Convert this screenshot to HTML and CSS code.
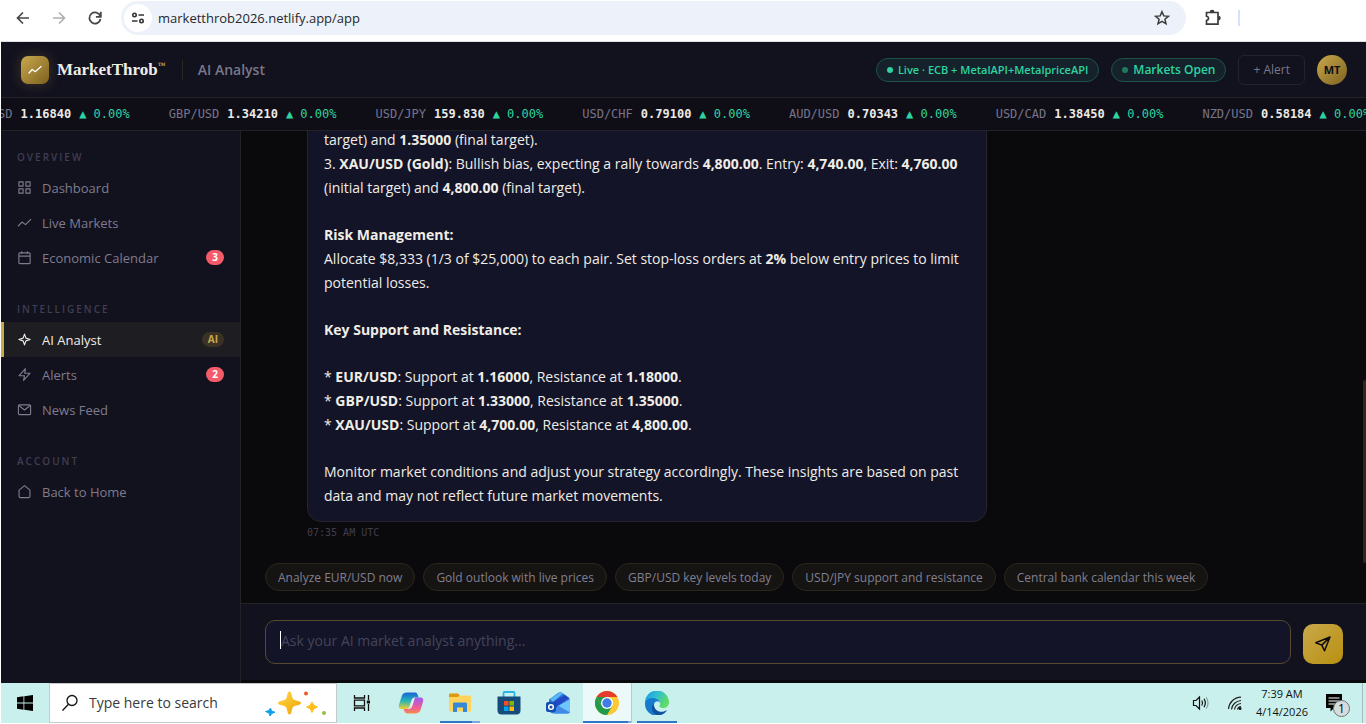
FILE: index.html
```html
<!DOCTYPE html>
<html lang="en">
<head>
<meta charset="utf-8">
<title>MarketThrob – AI Analyst</title>
<link rel="stylesheet" href="styles.css">
</head>
<body>
<div class="browser">
  <button class="tool" aria-label="Back"><svg width="16" height="16" viewBox="0 0 16 16" fill="none" stroke="#474747" stroke-width="1.7"><path d="M14 8H3M8 2.5 2.5 8 8 13.500"/></svg></button>
  <button class="tool" aria-label="Forward"><svg width="16" height="16" viewBox="0 0 16 16" fill="none" stroke="#b0b0b0" stroke-width="1.7"><path d="M2 8h11M8 2.500 13.500 8 8 13.500"/></svg></button>
  <button class="tool" aria-label="Reload"><svg width="16" height="16" viewBox="0 0 16 16" fill="none" stroke="#474747" stroke-width="1.8"><path d="M13.300 6.200A5.600 5.600 0 1 0 13.500 9"/><path d="M13.800 1.800v5H8.900" /></svg></button>
  <div class="address">
    <button class="site-info" aria-label="Site information"><svg width="14" height="14" viewBox="0 0 14 14" fill="none" stroke="#333" stroke-width="1.6"><circle cx="3.500" cy="4" r="1.700"/><path d="M7.500 4H13M1 10h5.500"/><circle cx="10.500" cy="10" r="1.700"/></svg></button>
    <input class="url" type="text" aria-label="Address" value="marketthrob2026.netlify.app/app">
    <button class="star" aria-label="Bookmark"><svg width="16" height="16" viewBox="0 0 16 16" fill="none" stroke="#3c3c3c" stroke-width="1.500"><path d="m8 1.700 1.800 4.200 4.600.4-3.500 3 1.100 4.500L8 11.400l-4 2.400 1.100-4.500-3.500-3 4.600-.4z"/></svg></button>
  </div>
  <button class="ext" aria-label="Extensions"><svg width="18" height="18" viewBox="0 0 18 18" fill="none" stroke="#3c3c3c" stroke-width="1.700"><path d="M2.500 3.500H14v11.700H2.500v-3.600c2.800-.8 2.800-3.700 0-4.500z"/><path d="M6.500 3.200a1.600 1.600 0 0 1 3.200 0M14.300 7.500a1.600 1.600 0 0 1 0 3.200" fill="#3c3c3c"/></svg></button>
  <span class="tool-sep"></span>
</div>

<div class="app">
  <header class="topbar">
    <span class="logo"><svg width="14" height="14" viewBox="0 0 14 14" fill="none" stroke="#fff" stroke-width="1.300" stroke-linejoin="round" stroke-linecap="round"><path d="m1 10 3.200-3.500 3 2.200L13 3.500"/></svg></span>
    <span class="brand">MarketThrob<sup>™</sup></span>
    <h1 class="page-name">AI Analyst</h1>
    <div class="status">
      <span class="pill pill-live"><i class="dot"></i>Live · ECB + MetalAPI+MetalpriceAPI</span>
      <span class="pill pill-open"><i class="dot dot-dim"></i>Markets Open</span>
      <button class="alert-btn">+ Alert</button>
      <button class="avatar">MT</button>
    </div>
  </header>

  <div class="ticker">
    <span class="quote"><span>EUR/USD</span><b>1.16840</b><em>▲ 0.00%</em></span>
    <span class="quote"><span>GBP/USD</span><b>1.34210</b><em>▲ 0.00%</em></span>
    <span class="quote"><span>USD/JPY</span><b>159.830</b><em>▲ 0.00%</em></span>
    <span class="quote"><span>USD/CHF</span><b>0.79100</b><em>▲ 0.00%</em></span>
    <span class="quote"><span>AUD/USD</span><b>0.70343</b><em>▲ 0.00%</em></span>
    <span class="quote"><span>USD/CAD</span><b>1.38450</b><em>▲ 0.00%</em></span>
    <span class="quote"><span>NZD/USD</span><b>0.58184</b><em>▲ 0.00%</em></span>
  </div>

  <div class="body">
    <nav class="sidebar">
      <section class="group">
        <h2>Overview</h2>
        <a class="item" href="#dashboard"><svg viewBox="0 0 16 16"><path d="M2 2h4.500v4.500H2zM9.500 2H14v4.500H9.500zM2 9.500h4.500V14H2zM9.500 9.500H14V14H9.500z"/></svg>Dashboard</a>
        <a class="item" href="#markets"><svg viewBox="0 0 16 16"><path d="m1 12 4.300-4.500 3.800 2.800L15 4.300"/></svg>Live Markets</a>
        <a class="item" href="#calendar"><svg viewBox="0 0 16 16"><rect x="2" y="3" width="12" height="11.500" rx="1"/><path d="M2 6.500h12M5 1.200V4M11 1.200V4"/></svg>Economic Calendar<span class="badge">3</span></a>
      </section>
      <section class="group">
        <h2>Intelligence</h2>
        <a class="item active" href="#analyst"><svg viewBox="0 0 16 16"><path d="M8 2.200 9.500 6.500 14 8 9.500 9.500 8 13.800 6.500 9.500 2 8l4.500-1.500z"/></svg>AI Analyst<span class="badge badge-ai">AI</span></a>
        <a class="item" href="#alerts"><svg viewBox="0 0 16 16"><path d="M9 1.800 2.200 9.300H8l-1 5 6.800-7.600H8.200z"/></svg>Alerts<span class="badge">2</span></a>
        <a class="item" href="#news"><svg viewBox="0 0 16 16"><rect x="1.500" y="3" width="13" height="10.500" rx="1"/><path d="M2 3.800 8 8.500l6-4.700"/></svg>News Feed</a>
      </section>
      <section class="group">
        <h2>Account</h2>
        <a class="item" href="#home"><svg viewBox="0 0 16 16"><path d="M2.200 6.500 8 1.700l5.800 4.800V13a1.500 1.500 0 0 1-1.500 1.500H3.700A1.500 1.500 0 0 1 2.200 13z"/></svg>Back to Home</a>
      </section>
    </nav>

    <main class="main">
      <div class="messages">
        <article class="message">
          <div class="bubble">
            <p>target) and <b>1.35000</b> (final target).<br>3. <b>XAU/USD (Gold)</b>: Bullish bias, expecting a rally towards <b>4,800.00</b>. Entry: <b>4,740.00</b>, Exit: <b>4,760.00</b><br>(initial target) and <b>4,800.00</b> (final target).</p>
            <p><b>Risk Management:</b><br>Allocate $8,333 (1/3 of $25,000) to each pair. Set stop-loss orders at <b>2%</b> below entry prices to limit<br>potential losses.</p>
            <p><b>Key Support and Resistance:</b></p>
            <p>* <b>EUR/USD</b>: Support at <b>1.16000</b>, Resistance at <b>1.18000</b>.<br>* <b>GBP/USD</b>: Support at <b>1.33000</b>, Resistance at <b>1.35000</b>.<br>* <b>XAU/USD</b>: Support at <b>4,700.00</b>, Resistance at <b>4,800.00</b>.</p>
            <p>Monitor market conditions and adjust your strategy accordingly. These insights are based on past<br>data and may not reflect future market movements.</p>
          </div>
          <time class="stamp">07:35 AM UTC</time>
        </article>
        <span class="thumb"></span>
      </div>
      <div class="chips">
        <button>Analyze EUR/USD now</button>
        <button>Gold outlook with live prices</button>
        <button>GBP/USD key levels today</button>
        <button>USD/JPY support and resistance</button>
        <button>Central bank calendar this week</button>
      </div>
      <form class="composer">
        <div class="field">
          <textarea rows="1" aria-label="Message" placeholder="Ask your AI market analyst anything..."></textarea>
          <span class="caret"></span>
        </div>
        <button class="send" type="button" aria-label="Send"><svg width="18" height="18" viewBox="0 0 18 18" fill="none" stroke="#0c0b10" stroke-width="1.500" stroke-linejoin="round"><path d="M16 2 1.800 7.700l6 2.400 2.700 5.700zM16 2 7.800 10.100"/></svg></button>
      </form>
    </main>
  </div>
</div>

<footer class="taskbar">
  <button class="task start" aria-label="Start"><svg width="16" height="16" viewBox="0 0 16 16"><path d="M0 2.200 6.500 1.300V7.600H0zM7.300 1.200 16 0v7.600H7.300zM0 8.400h6.500v6.300L0 13.800zM7.300 8.400H16V16l-8.700-1.200z"/></svg></button>
  <label class="search">
    <svg width="18" height="18" viewBox="0 0 18 18" fill="none" stroke="#111" stroke-width="1.300"><circle cx="11" cy="6.500" r="5"/><path d="M7.500 10.200 1.500 16.500"/></svg>
    <input type="text" placeholder="Type here to search" aria-label="Search">
    <svg width="62" height="26" viewBox="0 0 62 26"><defs><linearGradient id="gs" x1="0" y1="0" x2="1" y2="1"><stop offset="0" stop-color="#ffd84a"/><stop offset="1" stop-color="#eda400"/></linearGradient></defs><path d="M24.500 1.500c2.500 0 2 6 3.800 7.700C30 11 36 10.500 36 13s-6 2-7.700 3.800c-1.800 1.700-1.300 7.700-3.800 7.700s-2-6-3.800-7.700C19 15 13 15.500 13 13s6-2 7.700-3.800c1.800-1.700 1.300-7.700 3.800-7.700z" fill="url(#gs)"/><path d="M47 12q1 4 5.500 5-4.500 1-5.500 5.500-1-4.500-5.500-5.500 4.500-1 5.500-5z" fill="#ffbe1d" stroke="#ffbe1d"/><path d="m5.500 18 1 3L10 22.200 6.700 23.500 5 26l-1-3-3.500-1.500 3.500-1z" fill="#12a0e8" stroke="#12a0e8"/><circle cx="41" cy="3.500" r="2" fill="#ef5a24"/><circle cx="59" cy="23" r="2" fill="#8bc63f"/></svg>
  </label>
  <button class="task" aria-label="Task view"><svg width="18" height="18" viewBox="0 0 18 18" fill="none" stroke="#111" stroke-width="1.300"><path d="M1.500 1v3h10V1M1.500 17v-3h10v3M1.500 6.200h10v5.600h-10zM15.500 1v5M15.500 10v7"/><path d="M13.800 6.500H17v3h-3.200z" fill="#111" stroke="none"/></svg></button>
  <button class="task" aria-label="Copilot"><svg width="26" height="24" viewBox="0 0 26 24"><defs><linearGradient id="ca" x1="0" y1="0" x2="0" y2="1"><stop offset="0" stop-color="#1b62d8"/><stop offset=".5" stop-color="#23b6b8"/><stop offset="1" stop-color="#f2cf31"/></linearGradient><linearGradient id="cb" x1="0" y1="0" x2="0" y2="1"><stop offset="0" stop-color="#9b5cf0"/><stop offset=".6" stop-color="#ee5d9a"/><stop offset="1" stop-color="#f98a4b"/></linearGradient></defs><path d="M9 1.500h8c2 0 2.500 1.500 3 3l.6 2H17c-2 0-3 1.500-3.500 3l-2 6C11 17.500 10 18 8 18H4c-3 0-3.700-2-3-4.500l3-9C4.700 2.500 6.500 1.500 9 1.500z" fill="url(#ca)"/><path d="M17 22.500H9.500c-2 0-2.800-1.500-3.300-3L5.500 18H8c2 0 3-1 3.500-2.500l2-6c.5-1.500 1.500-3 3.500-3h5c3 0 3.700 2 3 4.500l-2.500 8c-.7 2.300-2.500 3.500-5.500 3.500z" fill="url(#cb)"/><path d="m11.500 15.500 2-6c.5-1.500 1.500-3 3.500-3l-2.500 8c-.6 1.900-1.700 3.500-4 3.500H8c2 0 3-1 3.500-2.500z" fill="#d9f5f0"/></svg></button>
  <button class="task running grouped" aria-label="File Explorer"><svg width="24" height="22" viewBox="0 0 24 22"><path d="M1 3c0-1 .5-1.500 1.500-1.500H10l2 2h9.500c1 0 1.500.5 1.500 1.500v14.500H1z" fill="#ffd35c"/><path d="M1 3c0-1 .5-1.500 1.500-1.500H10l1.500 1.700L10 5H1z" fill="#dc9a14"/><path d="M5 12c0-1 .5-1.500 1.500-1.500h11c1 0 1.500.5 1.500 1.500v8h-4v-4.500H9V20H5z" fill="#3389d8"/></svg></button>
  <button class="task" aria-label="Microsoft Store"><svg width="24" height="24" viewBox="0 0 24 24"><path d="M6.500 6V2.200C6.500 1.500 7 1 7.700 1h8.600c.7 0 1.200.5 1.200 1.200V6" fill="none" stroke="#27b5e9" stroke-width="1.800"/><path d="M.5 5.500h23v14c0 2.500-1.500 4-4 4h-15c-2.500 0-4-1.500-4-4z" fill="#164b7c"/><path d="M7 10h4.500v4.500H7z" fill="#f25022"/><path d="M12.500 10H17v4.500h-4.500z" fill="#7fba00"/><path d="M7 15.500h4.500V20H7z" fill="#00a4ef"/><path d="M12.500 15.500H17V20h-4.500z" fill="#ffb900"/></svg></button>
  <button class="task" aria-label="Outlook"><svg width="24" height="24" viewBox="0 0 24 24"><path d="M3 8.500 12 2c1.500-1 3-1 4.500 0l6 4.500c1 .7 1.500 1.500 1.500 3V19c0 2.500-1 3.500-3.500 3.500h-12C5 22.500 3 21 3 18z" fill="#2b6fd9"/><path d="m4 8 9-6c1.500-1 3-.5 4 .5L7 11z" fill="#56b8f5"/><path d="m7 11 12-7 4 3-13 9z" fill="#2447c6"/><path d="m12 15 12-7v11c0 2.500-1 3.500-3.500 3.500H8z" fill="#6fc5fa"/><path d="m12 14.500 12 7c-.7 1-2 1-3.500 1H8z" fill="#438ae8"/><rect x="0" y="11" width="10" height="10" rx="2" fill="#124fae"/><circle cx="5" cy="16" r="2.300" fill="none" stroke="#fff" stroke-width="1.500"/></svg></button>
  <button class="task running current" aria-label="Chrome"><svg width="24" height="24" viewBox="0 0 24 24"><circle cx="12" cy="12" r="12" fill="#fcc934"/><path d="M1.600 6A12 12 0 0 0 12 24l5.200-9L12 12 6.800 15z" fill="#229a4b"/><path d="M1.600 6A12 12 0 0 1 22.400 6H12L6.800 9z" fill="#e33b2e"/><path d="M1.600 6 6.800 15 12 12V6z" fill="#229a4b"/><path d="M1.600 6A12 12 0 0 1 22.400 6H12A6 6 0 0 0 6.200 10.500z" fill="#e33b2e" opacity=".0"/><circle cx="12" cy="12" r="6" fill="#fff"/><circle cx="12" cy="12" r="4.700" fill="#3f7de8"/></svg></button>
  <button class="task running edge" aria-label="Edge"><svg width="24" height="24" viewBox="0 0 24 24"><defs><linearGradient id="ea" x1="0" y1="0" x2="1" y2=".5"><stop offset="0" stop-color="#1595df"/><stop offset=".5" stop-color="#31bfd3"/><stop offset="1" stop-color="#61dc62"/></linearGradient></defs><path d="M0 12A12 12 0 0 1 24 11c0 4-2.800 6-6 6-2.500 0-4-1-3.500-2.500 2-2 0-5.500-3.500-5.500-5 0-10 1.500-11 3z" fill="url(#ea)"/><path d="M0 12c.5-3 4-5 7.500-5 3.500 0 7 2 7.500 5-2-3-5.500-1.500-6 1.500-.6 4.500 4 8.500 9.500 7.500l3.500-1.500A12 12 0 0 1 0 12z" fill="#157bcc"/><path d="M9 13c-.7 5 4.500 9 10 7.500l3-1.500A12 12 0 0 1 12 24c-5-1.500-7-8-3-11z" fill="#12529c"/></svg></button>
  <div class="tray">
    <svg width="18" height="16" viewBox="0 0 18 16" fill="none" stroke="#111" stroke-width="1.200"><path d="M1.500 5.500H4L7.500 2v12L4 10.500H1.500z"/><path d="M9.800 5.500q1.500 2.500 0 5M12 3.800q2.700 4.200 0 8.400"/><path d="M14.200 2.200q3.700 5.800 0 11.600" stroke="#8aa3a1"/></svg>
    <svg width="16" height="16" viewBox="0 0 16 16" fill="none" stroke="#222" stroke-width="1.200"><path d="M1.500 14C2 7.500 7 2.500 14 2.200M4.500 14.500C5 9.500 9 6 14 5.500M7.500 14.500c.5-3 3-5.500 6.500-6M10.500 14.500c.3-1.500 1.500-2.800 3.500-3"/><circle cx="13" cy="13.500" r="1.500" fill="#111" stroke="none"/></svg>
    <div class="clock"><span>7:39 AM</span><span>4/14/2026</span></div>
    <button class="notices" aria-label="Notifications"><svg width="18" height="18" viewBox="0 0 18 18"><path d="M1 0h16v14H9l-3.500 3.500V14H1z" fill="#000"/><path d="M3.500 4h11M3.500 7h11M3.500 10h11" stroke="#fff" stroke-width="1.200"/></svg><span class="count">1</span></button>
    <span class="peek"></span>
  </div>
</footer>
</body>
</html>
```
FILE: styles.css
```css
:root {
  --ui: "Open Sans", sans-serif;
  --mono: "DejaVu Sans Mono", "Liberation Mono", monospace;
  --system: "Open Sans", "Noto Sans", sans-serif;
  --gold: #c9a84c;
  --green: #2dd4a0;
  --panel: #12111e;
  --line: #232226;
}
* { box-sizing: border-box; }
body {
  margin: 0;
  height: 100vh;
  padding: 0 0 1px 1px;
  background: #fff;
  display: flex;
  flex-direction: column;
  overflow: hidden;
  font-family: var(--ui);
}
button, input, textarea { font: inherit; border: 0; padding: 0; margin: 0; background: none; }
svg { display: block; flex: none; }

/* Browser toolbar */
.browser {
  flex: none;
  display: flex;
  align-items: center;
  padding: 1px 0 6px 4px;
  border-bottom: 1px solid #dfe0e4;
}
.tool { width: 36px; display: grid; place-items: center; }
.address {
  flex: 1;
  display: flex;
  align-items: center;
  gap: 6px;
  margin-left: 8px;
  padding: 3px 16px 3px 3px;
  border-radius: 17px;
  background: #ecf1fa;
}
.site-info { width: 28px; height: 28px; border-radius: 50%; background: #fff; display: grid; place-items: center; }
.url { flex: 1; font: 13px/20px var(--system); color: #27282b; }
.ext { margin-left: 18px; }
.tool-sep { width: 2px; height: 16px; margin: 0 126px 0 16px; background: #d3e3fd; }

/* Application shell */
.app { flex: 1; min-height: 0; display: flex; flex-direction: column; background: #0a0a0d; }
.topbar {
  flex: none;
  display: flex;
  align-items: center;
  min-height: 56px;
  padding: 0 19px 0 20px;
  background: var(--panel);
  border-bottom: 1px solid var(--line);
}
.logo {
  width: 28px;
  height: 28px;
  border-radius: 7px;
  display: grid;
  place-items: center;
  background: linear-gradient(135deg, #c9a84c, #7d6120);
  box-shadow: 0 0 14px rgba(201, 168, 76, .25);
}
.brand { margin-left: 8px; font: bold 17px/24px "Liberation Serif", serif; color: #f0ede6; }
.brand sup { font-size: 8px; line-height: 0; color: var(--gold); }
.page-name {
  margin: 0 0 0 16px;
  padding-left: 15px;
  border-left: 1px solid #29271f;
  font-size: 14px;
  line-height: 20px;
  font-weight: 600;
  color: #7a7789;
}
.status { margin-left: auto; display: flex; align-items: center; gap: 12px; }
.pill {
  display: flex;
  align-items: center;
  gap: 5px;
  height: 24px;
  padding: 0 10px;
  border: 1px solid #1b5349;
  border-radius: 12px;
  background: #15222b;
  font-size: 11px;
  font-weight: 600;
  color: var(--green);
}
.pill-open { font-size: 12px; }
.dot { width: 6px; height: 6px; border-radius: 50%; background: var(--green); }
.dot-dim { background: #22795f; }
.alert-btn { height: 30px; padding: 0 14px; border: 1px solid #24222a; border-radius: 6px; font-size: 12px; color: #7a7789; }
.avatar { width: 30px; height: 30px; border-radius: 50%; background: linear-gradient(135deg, #c9a84c, #7d6120); font-size: 11px; font-weight: 700; color: #0d0c12; }

.ticker {
  flex: none;
  display: flex;
  gap: 39px;
  padding: 8px 0;
  overflow: hidden;
  border-bottom: 1px solid var(--line);
  background: #0f0e17;
  font: 12px/16px var(--mono);
  white-space: nowrap;
}
.quote { flex: none; display: flex; gap: 8px; color: #77748a; }
.quote:first-child { margin-left: -39px; }
.quote b { color: #eceae4; }
.quote em { font-style: normal; color: var(--green); }

.body { flex: 1; min-height: 0; display: flex; }
.sidebar {
  flex: none;
  width: 240px;
  padding-top: 20px;
  display: flex;
  flex-direction: column;
  gap: 28px;
  background: var(--panel);
  border-right: 1px solid var(--line);
}
.group h2 { margin: 0 16px 7px; font-size: 10px; line-height: 12px; font-weight: 600; letter-spacing: 2px; text-transform: uppercase; color: #403e52; }
.item {
  display: flex;
  align-items: center;
  gap: 10px;
  height: 35px;
  padding: 0 16px;
  font-size: 13px;
  color: #7f7c8d;
  text-decoration: none;
}
.item svg { width: 15px; height: 15px; fill: none; stroke: currentColor; stroke-width: 1.2; stroke-linejoin: round; }
.item.active { padding-left: 13px; border-left: 3px solid var(--gold); background: #1e1d22; color: #f0ede6; font-weight: 500; }
.badge { margin-left: auto; padding: 0 6px; border-radius: 8px; background: #f45b69; color: #fff; font-size: 10px; line-height: 15px; font-weight: 700; }
.badge-ai { background: #3a3325; color: var(--gold); }

/* Conversation */
.main { flex: 1; min-width: 0; display: flex; flex-direction: column; padding-bottom: 3px; }
.messages {
  position: relative;
  flex: 1;
  min-height: 0;
  display: flex;
  flex-direction: column;
  justify-content: flex-end;
  padding: 0 24px 24px 66px;
  overflow: hidden;
}
.message { max-width: 680px; }
.bubble {
  padding: 12px 16px 13px;
  border: 1px solid #25242f;
  border-radius: 14px;
  background: #131428;
  font-size: 14px;
  line-height: 24px;
  color: #f0ede6;
}
.bubble p { margin: 0 0 23px; }
.bubble p:last-child { margin: 0; }
.stamp { display: block; margin-top: 5px; font: 10px/12px var(--mono); color: #3f3d50; }
.thumb { position: absolute; right: 0; bottom: 0; width: 3px; height: 183px; border-radius: 2px; background: #2f291a; }
.chips { flex: none; display: flex; gap: 8px; padding: 0 24px 12px; }
.chips button { height: 28px; padding: 0 12px; border: 1px solid #2c271b; border-radius: 14px; background: #151412; font-size: 12px; color: #827f91; white-space: nowrap; }
.composer {
  flex: none;
  display: flex;
  align-items: flex-end;
  gap: 12px;
  padding: 16px 23px 16px 24px;
  border-top: 1px solid var(--line);
  background: var(--panel);
}
.field { position: relative; flex: 1; display: flex; }
.field textarea {
  flex: 1;
  height: 44px;
  padding: 10px 15px;
  border: 1px solid #56492f;
  border-radius: 10px;
  background: #131428;
  resize: none;
  outline: 0;
  font-size: 14px;
  line-height: 20px;
  color: #f0ede6;
}
.field textarea::placeholder { color: #454358; }
.caret { position: absolute; left: 15px; top: 11px; width: 1px; height: 18px; background: #fff; }
.send { width: 40px; height: 40px; border-radius: 10px; background: linear-gradient(135deg, #c9a84c, #b8900f); display: grid; place-items: center; }

/* Desktop taskbar */
.taskbar { flex: none; display: flex; height: 40px; background: #c9f0ed; font-family: var(--system); }
.task { width: 49px; display: grid; place-items: center; }
.start { width: 48px; }
.search {
  width: 288px;
  display: flex;
  align-items: center;
  gap: 10px;
  padding: 0 9px 0 11px;
  border: 1px solid #c4c9c9;
  background: #fff;
}
.search input { flex: 1; min-width: 0; font-size: 14px; line-height: 20px; }
.search input::placeholder { color: #3a3a3a; opacity: 1; }
.running { background: linear-gradient(#2f78c8, #2f78c8) center bottom / 40px 2px no-repeat; }
.grouped { background-image: linear-gradient(90deg, #2f78c8 80%, #7fa9dc 80%); }
.current { margin-left: 1px; background: linear-gradient(90deg, #2f78c8 92%, #7fa9dc 92%) center bottom / 49px 2px no-repeat #ecf9f8; border-right: 1px solid #a9d3d0; }
.tray { margin-left: auto; display: flex; align-items: center; gap: 17px; }
.clock { display: flex; flex-direction: column; align-items: center; font-size: 11px; line-height: 18px; color: #111; margin-left: -4px; }
.notices { position: relative; }
.count {
  position: absolute;
  left: 8px;
  top: 6px;
  width: 17px;
  height: 17px;
  border: 1px solid #6f7575;
  border-radius: 50%;
  background: #d5dddc;
  font-size: 12px;
  line-height: 15px;
  text-align: center;
}
.peek { width: 4px; height: 40px; margin-left: 2px; border-left: 1px solid #a0bfbd; }
```
